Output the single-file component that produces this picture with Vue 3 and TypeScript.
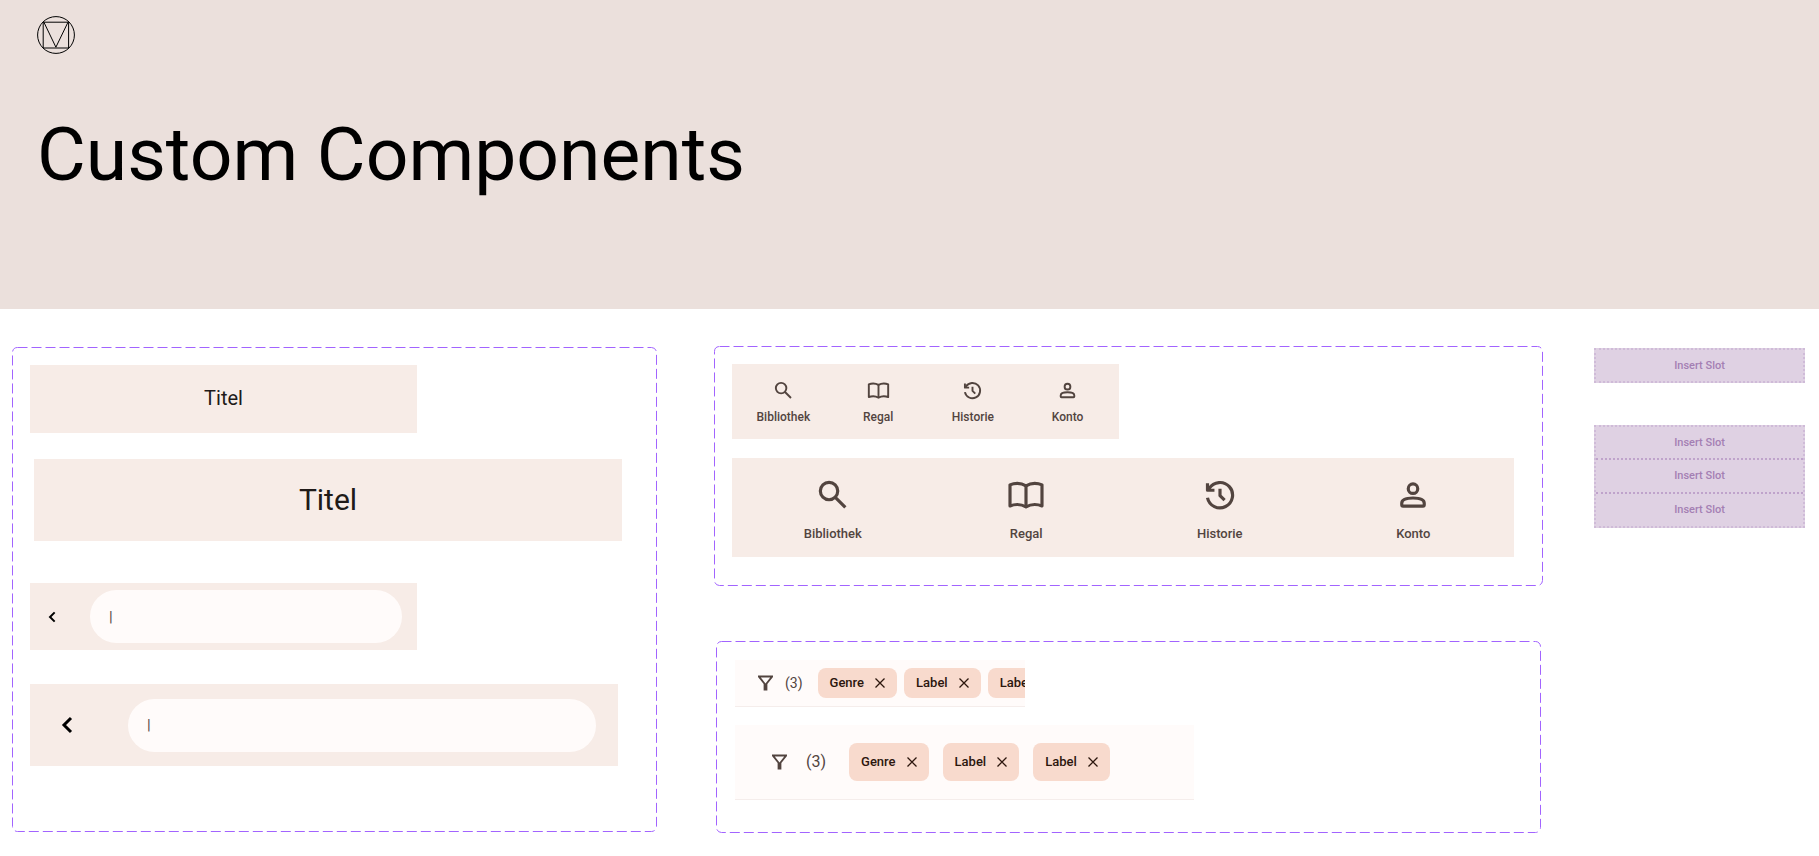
<script setup lang="ts">
import { ref } from 'vue'

type IconName = 'search' | 'book' | 'history' | 'person'

interface NavItem {
  icon: IconName
  label: string
}

const navItems: NavItem[] = [
  { icon: 'search', label: 'Bibliothek' },
  { icon: 'book', label: 'Regal' },
  { icon: 'history', label: 'Historie' },
  { icon: 'person', label: 'Konto' },
]

const icons: Record<IconName, string[]> = {
  search: ['M9.5 4a5.5 5.5 0 1 1 0 11a5.5 5.5 0 0 1 0-11z', 'M13.6 13.6L19.8 19.8'],
  book: [
    'M12 6.2C10.3 5.2 8.4 4.7 6.5 4.7C4.9 4.7 3.3 5 1.9 5.6V18.9C3.3 18.3 4.9 18 6.5 18C8.4 18 10.3 18.5 12 19.5C13.7 18.5 15.6 18 17.5 18C19.1 18 20.7 18.3 22.1 18.9V5.6C20.7 5 19.1 4.7 17.5 4.7C15.6 4.7 13.7 5.2 12 6.2z',
    'M12 6.2V19.2',
  ],
  history: ['M4.1 13.7A8 8 0 1 0 5.2 7.8L4.4 8.9', 'M4.1 4.6V9H8.5', 'M12 8V12.4L14.9 15.3'],
  person: [
    'M12 5a3 3 0 1 1 0 6a3 3 0 0 1 0-6z',
    'M4.9 17.2C4.9 14.6 8.6 13.9 12 13.9S19.1 14.6 19.1 17.2V18.2Q19.1 19 18.3 19H5.7Q4.9 19 4.9 18.2z',
  ],
}

const navSizes = ['small', 'large'] as const
const filterSizes = ['small', 'large'] as const
const searchSizes = ['small', 'large'] as const
const chips = ['Genre', 'Label', 'Label']
const slotGroups = [1, 3]
const queries = ref({ small: '|', large: '|' })
</script>

<template>
  <div class="page">
    <header class="hero">
      <svg class="logo" viewBox="0 0 38 38" aria-hidden="true">
        <circle cx="19" cy="19" r="18.4" />
        <path d="M6.2 6.2H31.6V32H6.2zM6.9 6.2L18.9 31.2L31 6.2" />
      </svg>
      <h1>Custom Components</h1>
    </header>

    <main class="board">
      <section class="panel bars" aria-label="App bars">
        <svg class="outline" aria-hidden="true"><rect x="0.5" y="0.5" rx="5" /></svg>
        <div class="bar title-small"><h2>Titel</h2></div>
        <div class="bar title-large"><h2>Titel</h2></div>
        <form v-for="size in searchSizes" :key="size" class="bar search" :class="size" @submit.prevent>
          <button type="button" class="back" aria-label="Zurück">
            <svg viewBox="0 0 12 18" aria-hidden="true"><path d="M10 2L3 9L10 16" /></svg>
          </button>
          <input v-model="queries[size]" type="text" aria-label="Suche" />
        </form>
      </section>

      <div class="middle">
        <section class="panel navs" aria-label="Navigation bars">
          <svg class="outline" aria-hidden="true"><rect x="0.5" y="0.5" rx="5" /></svg>
          <nav v-for="size in navSizes" :key="size" class="bar nav" :class="size">
            <a v-for="item in navItems" :key="item.label" href="#">
              <svg viewBox="0 0 24 24" aria-hidden="true">
                <path v-for="d in icons[item.icon]" :key="d" :d="d" />
              </svg>
              <span>{{ item.label }}</span>
            </a>
          </nav>
        </section>

        <section class="panel filters" aria-label="Filter bars">
          <svg class="outline" aria-hidden="true"><rect x="0.5" y="0.5" rx="5" /></svg>
          <div v-for="size in filterSizes" :key="size" class="filter" :class="size">
            <svg class="funnel" viewBox="0 0 16 16" aria-hidden="true">
              <path fill-rule="evenodd" d="M0 0H16V1.6L10 9V16H6V9L0 1.6zM3 2L8 8.4L13 2z" />
            </svg>
            <span class="count">(3)</span>
            <div class="chips">
              <button v-for="(chip, i) in chips" :key="i" type="button" class="chip">
                {{ chip }}
                <svg viewBox="0 0 10 10" aria-hidden="true"><path d="M0.5 0.5L9.5 9.5M9.5 0.5L0.5 9.5" /></svg>
              </button>
            </div>
          </div>
        </section>
      </div>

      <section class="slots" aria-label="Slots">
        <div v-for="count in slotGroups" :key="count" class="slot-group">
          <div v-for="n in count" :key="n" class="slot">Insert Slot</div>
        </div>
      </section>
    </main>
  </div>
</template>

<style>
body {
  margin: 0;
  background: #fff;
}
</style>

<style scoped>
.page {
  font-family: Roboto, 'Liberation Sans', sans-serif;
  color: #201a18;
}

.page * {
  box-sizing: border-box;
}

h1,
h2 {
  margin: 0;
  font-weight: 400;
}

.hero {
  min-height: 309px;
  padding: 16px 37px;
  background: #ebe0dc;
}

.logo {
  display: block;
  width: 38px;
  height: 38px;
  fill: none;
  stroke: #000;
  stroke-width: 1;
}

h1 {
  margin-top: 56px;
  color: #000;
  font-size: 75px;
  line-height: 88px;
}

.board {
  display: grid;
  grid-template-columns: minmax(0, 645fr) minmax(0, 835fr) minmax(0, 211fr);
  column-gap: 51px;
  align-items: start;
  padding: 37px 14px 22px 12px;
}

.panel {
  position: relative;
  display: flex;
  flex-direction: column;
  padding: 18px;
}

.outline {
  position: absolute;
  inset: 0;
  width: 100%;
  height: 100%;
  pointer-events: none;
  fill: none;
  stroke: #a264ff;
  stroke-width: 1;
  stroke-dasharray: 10 4;
}

.outline rect {
  width: calc(100% - 1px);
  height: calc(100% - 1px);
}

.bar {
  width: 100%;
  background: #f7ece7;
}

.bars {
  margin-top: 1px;
  padding-bottom: 66px;
}

.title-small,
.title-large {
  display: flex;
  align-items: center;
  justify-content: center;
}

.title-small {
  max-width: 387px;
  height: 68px;
  padding-bottom: 2px;
}

.title-small h2 {
  font-size: 20px;
  line-height: 24px;
}

.title-large {
  max-width: 588px;
  height: 82px;
  margin: 26px 0 42px 4px;
}

.title-large h2 {
  font-size: 30px;
  line-height: 36px;
}

.search {
  display: flex;
  align-items: center;
}

.search.small {
  max-width: 387px;
  height: 67px;
  padding: 0 15px 0 18px;
  gap: 34px;
}

.search.large {
  max-width: 588px;
  height: 82px;
  margin-top: 34px;
  padding: 0 22px 0 31px;
  gap: 55px;
}

.back {
  display: flex;
  flex: none;
  padding: 0;
  border: 0;
  background: none;
}

.back svg {
  width: 12px;
  height: 18px;
  fill: none;
  stroke: #000;
  stroke-width: 3;
}

.search.small .back svg {
  width: 8px;
  height: 12px;
}

.search input {
  flex: 1;
  min-width: 0;
  height: 53px;
  padding: 0 19px;
  border: 0;
  border-radius: 27px;
  outline: 0;
  background: #fffbfa;
  color: #52443f;
  font: 400 15px/20px Roboto, 'Liberation Sans', sans-serif;
}

.middle {
  display: flex;
  flex-direction: column;
  gap: 55px;
  padding-left: 6px;
}

.navs {
  gap: 19px;
  padding-bottom: 29px;
}

.nav {
  display: flex;
  padding: 0 4px;
}

.nav.small {
  max-width: 387px;
  height: 75px;
  padding-top: 15px;
}

.nav.large {
  max-width: 782px;
  height: 99px;
  padding-top: 18px;
}

.nav a {
  display: flex;
  flex: 1;
  flex-direction: column;
  align-items: center;
  gap: 7px;
  color: #52443f;
  font-size: 12px;
  font-weight: 500;
  line-height: 16px;
  text-decoration: none;
}

.nav svg {
  width: 23px;
  height: 23px;
  fill: none;
  stroke: currentColor;
  stroke-width: 2;
  stroke-linejoin: round;
}

.nav.large a {
  gap: 12px;
  font-size: 13px;
}

.nav.large svg {
  width: 38px;
  height: 38px;
}

.filters {
  gap: 18px;
  margin: 0 2px;
  padding: 19px 19px 33px;
}

.filter {
  display: flex;
  align-items: center;
  width: 100%;
  overflow: hidden;
  border-bottom: 1px solid #f5edeb;
  background: #fffbfa;
}

.filter.small {
  max-width: 290px;
  height: 47px;
  padding-left: 23px;
}

.filter.large {
  max-width: 459px;
  height: 75px;
  padding-left: 37px;
}

.funnel {
  flex: none;
  width: 15px;
  height: 16px;
  fill: #52443f;
}

.count {
  flex: none;
  margin: 0 15px 0 12px;
  color: #52443f;
  font-size: 14px;
  line-height: 20px;
}

.large .count {
  margin: 0 23px 0 19px;
  font-size: 16px;
}

.chips {
  display: flex;
  gap: 7px;
}

.large .chips {
  gap: 14px;
}

.chip {
  display: flex;
  flex: none;
  align-items: center;
  gap: 11px;
  height: 30px;
  padding: 0 12px;
  border: 0;
  border-radius: 8px;
  background: #f8dacd;
  color: #2c160d;
  font: 500 13px/20px Roboto, 'Liberation Sans', sans-serif;
}

.large .chip {
  height: 38px;
}

.chip svg {
  width: 10px;
  height: 10px;
  fill: none;
  stroke: currentColor;
  stroke-width: 1.3;
}

.slots {
  display: flex;
  flex-direction: column;
  gap: 42px;
  padding-top: 2px;
}

.slot-group {
  border: 2px dotted #cfbbd8;
  background: #dfd1e3;
}

.slot {
  height: 31px;
  color: #a47fb3;
  font-size: 11px;
  font-weight: 500;
  line-height: 32px;
  text-align: center;
}

.slot + .slot {
  height: 34px;
  border-top: 2px dotted #bfa3cb;
}
</style>
